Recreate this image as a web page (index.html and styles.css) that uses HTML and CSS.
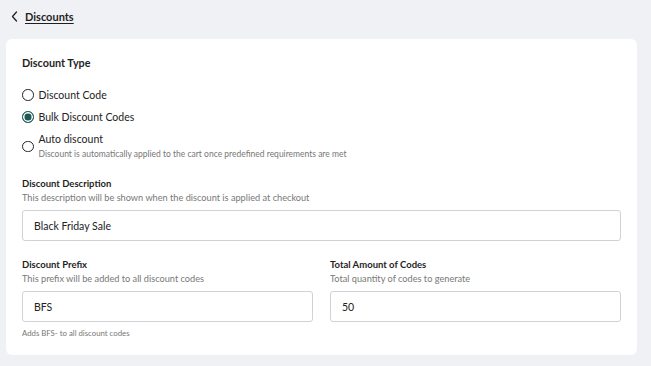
FILE: index.html
```html
<!DOCTYPE html>
<html lang="en">
<head>
<meta charset="utf-8">
<title>Discounts</title>
<link rel="stylesheet" href="styles.css">
</head>
<body>
<header class="topbar">
  <a class="back" href="#">
    <svg class="chev" width="7" height="11" viewBox="0 0 7 11"><path d="M5.5 1 L1.5 5.5 L5.5 10" fill="none" stroke="#222" stroke-width="1.3" stroke-linecap="round" stroke-linejoin="round"/></svg>
    <span class="back-text">Discounts</span>
  </a>
</header>
<main class="card">
  <h2 class="section-title">Discount Type</h2>
  <div class="radios">
    <label class="radio">
      <span class="dot"></span>
      <span class="radio-text"><span class="radio-label">Discount Code</span></span>
    </label>
    <label class="radio">
      <span class="dot on"></span>
      <span class="radio-text"><span class="radio-label">Bulk Discount Codes</span></span>
    </label>
    <label class="radio">
      <span class="dot"></span>
      <span class="radio-text">
        <span class="radio-label">Auto discount</span>
        <span class="radio-desc">Discount is automatically applied to the cart once predefined requirements are met</span>
      </span>
    </label>
  </div>

  <div class="field field-desc">
    <div class="label">Discount Description</div>
    <div class="help">This description will be shown when the discount is applied at checkout</div>
    <div class="input">Black Friday Sale</div>
  </div>

  <div class="row">
    <div class="field">
      <div class="label">Discount Prefix</div>
      <div class="help">This prefix will be added to all discount codes</div>
      <div class="input">BFS</div>
      <div class="note">Adds BFS- to all discount codes</div>
    </div>
    <div class="field">
      <div class="label">Total Amount of Codes</div>
      <div class="help">Total quantity of codes to generate</div>
      <div class="input">50</div>
    </div>
  </div>
</main>
</body>
</html>
```

FILE: styles.css
```css
* { box-sizing: border-box; }
html, body { margin: 0; padding: 0; }
body {
  background: #f0f1f5;
  font-family: Lato, "Open Sans", sans-serif;
  color: #1f1f1f;
  width: 651px;
  height: 366px;
  overflow: hidden;
}
.topbar {
  height: 39px;
  padding: 6px 0 0 11px;
}
.back {
  display: inline-flex;
  align-items: center;
  gap: 7px;
  color: #1f1f1f;
  text-decoration: none;
  height: 16px;
}
.chev { display: block; }
.back-text {
  font-size: 11px;
  font-weight: 700;
  text-decoration: underline;
  text-underline-offset: 2px;
  line-height: 16px;
}
.card {
  display: block;
  margin: 0 14px 0 6px;
  background: #fff;
  border-radius: 6px;
  padding: 17px 16px 16px 16px;
  height: 316px;
}
.section-title {
  margin: 0;
  font-size: 10.8px;
  font-weight: 700;
  line-height: 14px;
}
.radios {
  margin-top: 18px;
  display: flex;
  flex-direction: column;
  gap: 8px;
}
.radio {
  display: flex;
  align-items: center;
  gap: 5px;
}
.dot {
  width: 11.5px;
  height: 11.5px;
  border-radius: 50%;
  border: 1.3px solid #222;
  flex: none;
  background: #fff;
}
.dot.on {
  border-color: #1c5a55;
  background: #1c5a55;
  box-shadow: inset 0 0 0 1.5px #fff;
}
.radio-text {
  display: flex;
  flex-direction: column;
}
.radio-label {
  font-size: 10.5px;
  line-height: 14px;
  color: #222;
}
.radio-desc {
  font-size: 8.5px;
  line-height: 14px;
  color: #777;
  margin-top: 1px;
}
.field-desc { margin-top: 16px; }
.label {
  font-size: 9.5px;
  font-weight: 700;
  line-height: 14px;
  color: #1f1f1f;
}
.help {
  font-size: 9.2px;
  line-height: 14px;
  color: #787878;
}
.input {
  margin-top: 5px;
  height: 31px;
  border: 1px solid #cfd2d6;
  border-radius: 3px;
  padding: 0 11px;
  display: flex;
  align-items: center;
  font-size: 10.5px;
  color: #222;
}
.row {
  margin-top: 17px;
  display: grid;
  grid-template-columns: 1fr 1fr;
  gap: 17px;
}
.note {
  margin-top: 6px;
  font-size: 7.8px;
  line-height: 10px;
  color: #777;
}
```
